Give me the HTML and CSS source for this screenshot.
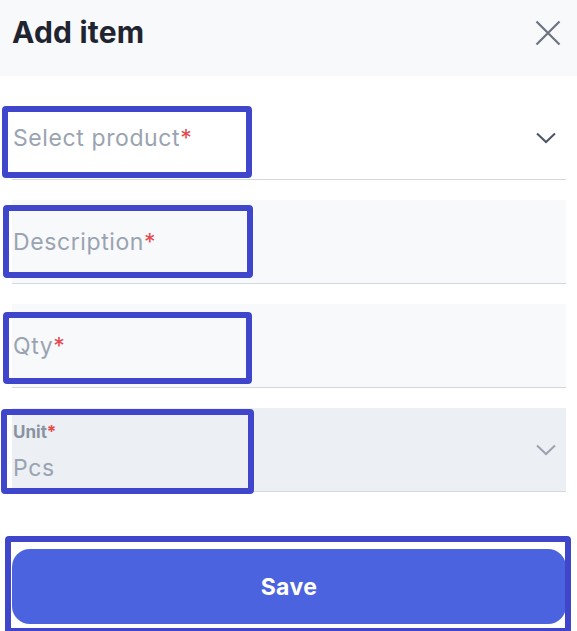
FILE: index.html
```html
<!DOCTYPE html>
<html>

<head>
    <meta charset="UTF-8">
    <link rel="stylesheet" href="styles.css">
    <title>Add item</title>
</head>

<body>
    <div class="header">
        <div class="title">Add item</div>
        <div class="close">
            <svg width="26" height="26" viewBox="0 0 26 26">
                <path d="M1.5 1.5 L24.5 24.5 M24.5 1.5 L1.5 24.5" stroke="#6b7280" stroke-width="2.2" fill="none" />
            </svg>
        </div>
    </div>

    <div class="form">
        <div class="field selectField">
            <div class="placeholder">Select product<span class="req">*</span></div>
            <svg class="chevron" width="20" height="12" viewBox="0 0 20 12">
                <path d="M1 1.5 L10 10 L19 1.5" stroke="#4b5563" stroke-width="2" fill="none" />
            </svg>
        </div>
        <div class="field filled">
            <div class="placeholder">Description<span class="req">*</span></div>
        </div>
        <div class="field filled">
            <div class="placeholder">Qty<span class="req">*</span></div>
        </div>
        <div class="field unitField">
            <div class="unitText">
                <div class="label">Unit<span class="req">*</span></div>
                <div class="value">Pcs</div>
            </div>
            <svg class="chevron" width="20" height="12" viewBox="0 0 20 12">
                <path d="M1 1.5 L10 10 L19 1.5" stroke="#9ca3af" stroke-width="2" fill="none" />
            </svg>
        </div>

        <div class="saveButton">Save</div>
    </div>

    <div class="mark mark1"></div>
    <div class="mark mark2"></div>
    <div class="mark mark3"></div>
    <div class="mark mark4"></div>
    <div class="mark mark5"></div>
</body>

</html>
```

FILE: styles.css
```css
body {
    margin: 0;
    font-family: Inter, "Noto Sans", sans-serif;
    background: white;
    position: relative;
    height: 631px;
    overflow: hidden;
}

.header {
    height: 76px;
    background: #f8f9fb;
    display: flex;
    align-items: flex-start;
    justify-content: space-between;
    padding: 0 16px 0 12px;
    box-sizing: border-box;
}

.title {
    font-size: 30px;
    font-weight: 700;
    letter-spacing: 0.2px;
    color: #1f2430;
    margin-top: 14px;
}

.close {
    margin-top: 20px;
}

.form {
    display: flex;
    flex-direction: column;
    gap: 20px;
    padding: 20px 11px 0 12px;
}

.field {
    height: 84px;
    display: flex;
    align-items: center;
    justify-content: space-between;
    border-bottom: solid 1px #d3d8df;
    box-sizing: border-box;
    padding: 0 10px 0 1px;
}

.selectField {
    background: white;
}

.filled {
    background: #f8f9fb;
}

.unitField {
    background: #eceff3;
}

.placeholder {
    font-size: 23px;
    letter-spacing: 0.6px;
    color: #9aa3b1;
}

.req {
    color: #e5484d;
}

.unitText {
    display: flex;
    flex-direction: column;
    gap: 12px;
    margin-top: 4px;
}

.label {
    font-size: 17px;
    font-weight: 700;
    color: #8a93a1;
}

.value {
    font-size: 23px;
    letter-spacing: 0.6px;
    color: #9aa3b1;
}

.saveButton {
    margin-top: 37px;
    height: 75px;
    border-radius: 18px;
    background: #4c63df;
    color: white;
    font-size: 23px;
    font-weight: 700;
    letter-spacing: 0.4px;
    display: flex;
    align-items: center;
    justify-content: center;
}

.mark {
    position: absolute;
    border: solid 6px #4046cc;
    border-radius: 4px;
    box-sizing: border-box;
}

.mark1 {
    left: 2px;
    top: 106px;
    width: 250px;
    height: 72px;
}

.mark2 {
    left: 3px;
    top: 205px;
    width: 250px;
    height: 73px;
}

.mark3 {
    left: 3px;
    top: 312px;
    width: 249px;
    height: 72px;
}

.mark4 {
    left: 1px;
    top: 409px;
    width: 253px;
    height: 85px;
}

.mark5 {
    left: 5px;
    top: 536px;
    width: 566px;
    height: 98px;
}
```
